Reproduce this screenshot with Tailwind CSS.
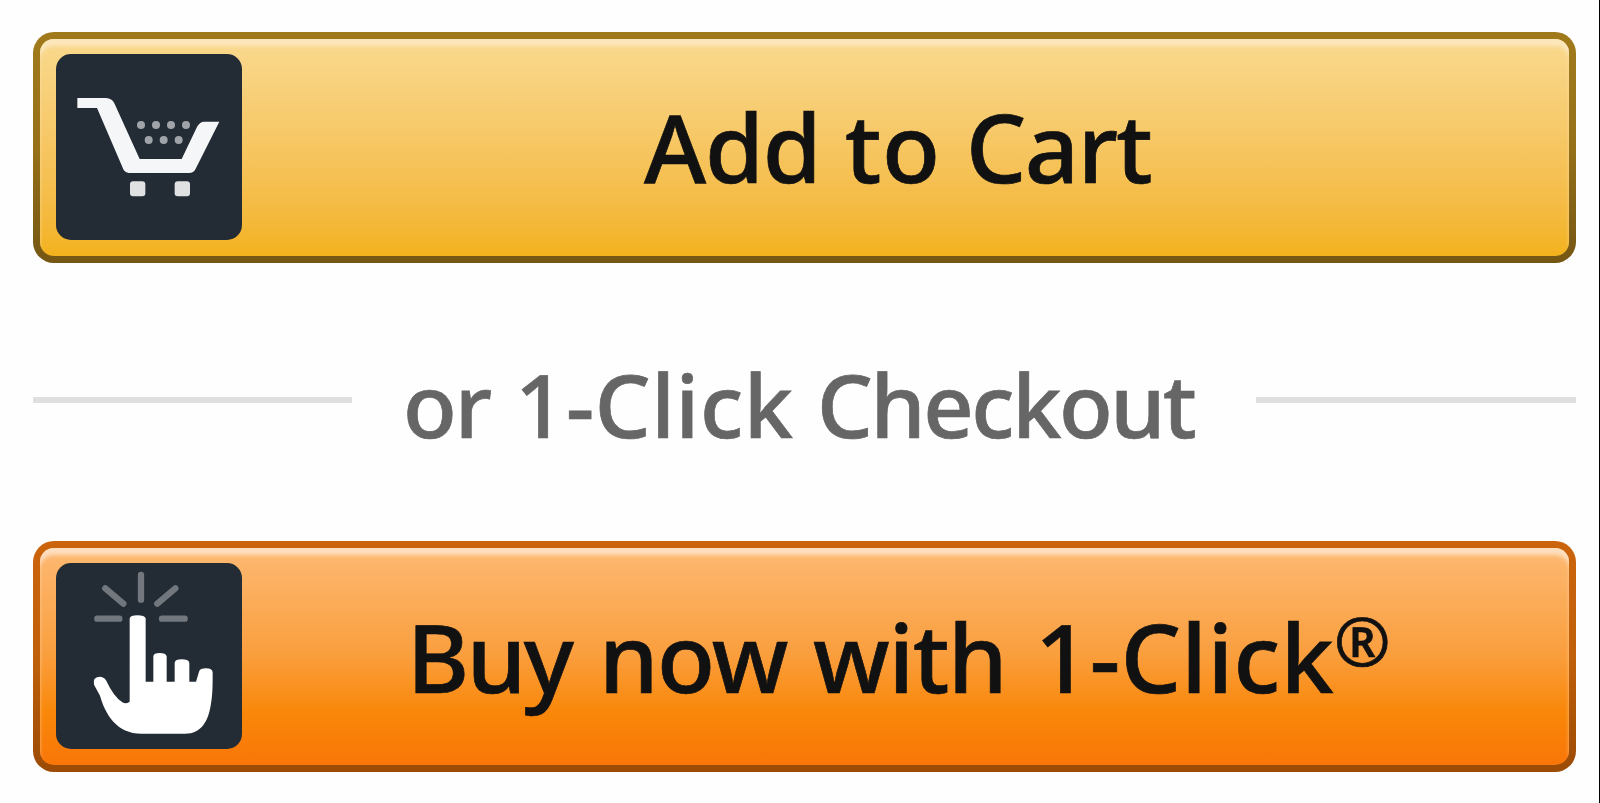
<!DOCTYPE html>
<html lang="en">
<head>
<meta charset="utf-8">
<title>Checkout</title>
<script src="https://cdn.jsdelivr.net/npm/@tailwindcss/browser@4"></script>
</head>
<body class="bg-white">
<main class="flex h-[803px] w-[1600px] flex-col overflow-hidden border-r border-black bg-[#fefefe] pt-[32px] pl-[33px] font-['Noto_Sans','Open_Sans',sans-serif] font-medium whitespace-nowrap text-[#111] [-webkit-text-stroke:0.7px_currentColor]">

  <button class="flex h-[231px] w-[1543px] shrink-0 rounded-[21px] bg-linear-to-b from-[#a07a1a] via-[#96711a] to-[#755613] p-[7px] text-left">
    <span class="flex h-[217px] w-[1529px] rounded-[14px] bg-linear-to-b from-[#f9d98e] to-[#f3b21b] pt-[15px] pl-[16px] shadow-[inset_0_8px_4px_-1px_#fce7bd]">
      <svg class="size-[186px] shrink-0 rounded-[15px] bg-[#232c35]" viewBox="108 102 558 558">
        <path fill="#f5f6f7" d="M172 234H258Q276 235 283 250L359 417H485L532 319Q540 305 552 305H598L527 446Q521 459 507 459H326Q317 459 311 450L231 264H172Z"/>
        <g fill="#dfe1e3"><rect x="330" y="484" width="46" height="45" rx="9"/><rect x="464" y="484" width="46" height="45" rx="9"/></g>
        <g fill="#a0a4a8"><circle cx="363" cy="315" r="12"/><circle cx="408" cy="315" r="12"/><circle cx="453" cy="315" r="12"/><circle cx="498" cy="315" r="12"/><circle cx="386" cy="360" r="12"/><circle cx="431" cy="360" r="12"/><circle cx="476" cy="360" r="12"/></g>
      </svg>
      <span class="mt-[44px] ml-[402px] flex text-[95px] leading-[96px]">
        <span class="w-[201px] tracking-[-1.2px]">Add</span>
        <span class="w-[121px] tracking-[0.5px]">to</span>
        <span class="tracking-[-1.5px]">Cart</span>
      </span>
    </span>
  </button>

  <div class="flex h-[278px] w-[1543px] shrink-0 text-[#666]">
    <div class="mt-[134px] h-[6px] w-[319px] shrink-0 bg-[#e1dfe0]"></div>
    <div class="mt-[97px] ml-[51px] flex w-[853px] shrink-0 text-[88px] leading-none">
      <span class="w-[112px] tracking-[-2px]">or</span>
      <span class="w-[302px] tracking-[0.6px]">1-Click</span>
      <span class="tracking-[-2.4px]">Checkout</span>
    </div>
    <div class="mt-[134px] h-[6px] w-[320px] shrink-0 bg-[#e1dfe0]"></div>
  </div>

  <button class="flex h-[231px] w-[1543px] shrink-0 rounded-[21px] bg-linear-to-b from-[#cb640c] via-[#c0600a] to-[#9b4b06] p-[7px] text-left">
    <span class="flex h-[217px] w-[1529px] rounded-[14px] bg-[linear-gradient(to_bottom,#fdb973,#fa9f3f_48%,#f98709_76%,#f97608)] pt-[15px] pl-[16px] shadow-[inset_0_8px_4px_-1px_#fedfc0]">
      <svg class="size-[186px] shrink-0 rounded-[15px] bg-[#232c35]" viewBox="108 102 558 558">
        <path stroke="#72777d" stroke-width="19" stroke-linecap="round" d="M363 138V212M256 178L310 224M466 178L412 224M232 269H298M426 269H494"/>
        <path fill="#fff" d="M329 268Q331 259 352 259Q374 259 377 268V458H400V382Q401 372 419 372Q437 372 440 382V458H464V401Q466 391 485 391Q505 391 508 401V458H528L537 428Q540 418 558 418Q577 418 578 430C578 470 578 500 572 530C564 575 545 614 495 614H365C290 614 256 556 240 500L222 467Q217 444 238 443Q252 443 258 454Q282 505 307 520Q318 527 329 518Z"/>
      </svg>
      <span class="mt-[45px] ml-[165px] flex text-[95px] leading-[96px]">
        <span class="w-[192px] tracking-[-2.5px]">Buy</span>
        <span class="w-[214px] tracking-[-1.5px]">now</span>
        <span class="w-[222px] tracking-[-1.2px]">with</span>
        <span class="w-[299px] shrink-0 tracking-[0.4px]">1-Click</span>
        <span class="-mt-[2px] text-[68px] leading-none">®</span>
      </span>
    </span>
  </button>
</main>
</body>
</html>
